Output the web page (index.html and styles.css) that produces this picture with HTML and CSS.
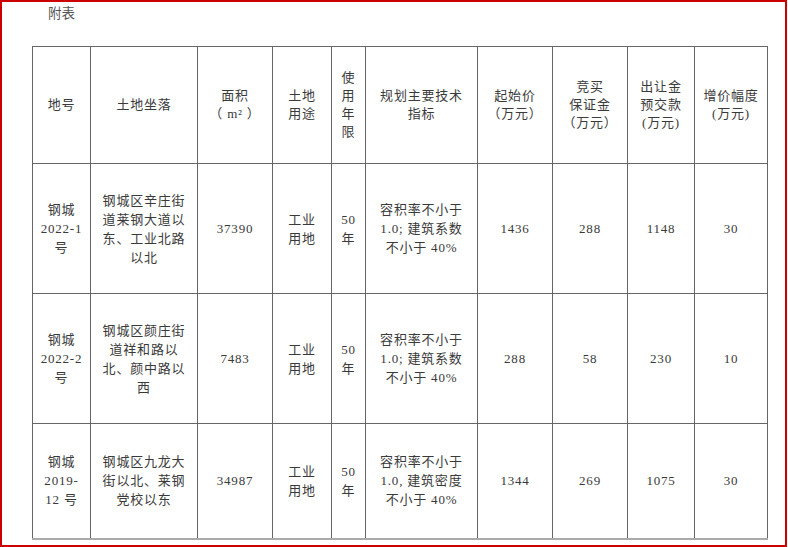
FILE: index.html
```html
<!DOCTYPE html>
<html lang="zh-CN">
<head>
<meta charset="utf-8">
<title>附表</title>
<link rel="stylesheet" href="styles.css">
</head>
<body>
<div class="frame">
  <div class="title">附表</div>
  <table class="land">
    <colgroup>
      <col class="c1"><col class="c2"><col class="c3"><col class="c4"><col class="c5">
      <col class="c6"><col class="c7"><col class="c8"><col class="c9"><col class="c10">
    </colgroup>
    <tr class="head">
      <td>地号</td>
      <td>土地坐落</td>
      <td>面积<br>（ m² ）</td>
      <td>土地<br>用途</td>
      <td>使<br>用<br>年<br>限</td>
      <td>规划主要技术<br>指标</td>
      <td>起始价<br>（万元）</td>
      <td>竞买<br>保证金<br>（万元）</td>
      <td>出让金<br>预交款<br>(万元)</td>
      <td>增价幅度<br>(万元)</td>
    </tr>
    <tr class="row">
      <td>钢城<br>2022-1<br>号</td>
      <td>钢城区辛庄街<br>道莱钢大道以<br>东、工业北路<br>以北</td>
      <td>37390</td>
      <td>工业<br>用地</td>
      <td>50<br>年</td>
      <td>容积率不小于<br>1.0; 建筑系数<br>不小于 40%</td>
      <td>1436</td>
      <td>288</td>
      <td>1148</td>
      <td>30</td>
    </tr>
    <tr class="row">
      <td>钢城<br>2022-2<br>号</td>
      <td>钢城区颜庄街<br>道祥和路以<br>北、颜中路以<br>西</td>
      <td>7483</td>
      <td>工业<br>用地</td>
      <td>50<br>年</td>
      <td>容积率不小于<br>1.0; 建筑系数<br>不小于 40%</td>
      <td>288</td>
      <td>58</td>
      <td>230</td>
      <td>10</td>
    </tr>
    <tr class="row last">
      <td>钢城<br>2019-<br>12 号</td>
      <td>钢城区九龙大<br>街以北、莱钢<br>党校以东</td>
      <td>34987</td>
      <td>工业<br>用地</td>
      <td>50<br>年</td>
      <td>容积率不小于<br>1.0, 建筑密度<br>不小于 40%</td>
      <td>1344</td>
      <td>269</td>
      <td>1075</td>
      <td>30</td>
    </tr>
  </table>
</div>
</body>
</html>
```
FILE: styles.css
```css
html, body {
  margin: 0;
  padding: 0;
  background: #fff;
}
.frame {
  box-sizing: border-box;
  width: 787px;
  height: 547px;
  border: 2px solid #cc0000;
  padding: 0 0 0 30px;
  font-family: "Liberation Serif", "Noto Sans CJK SC", serif;
  color: #3a3a3a;
}
.title {
  margin: 0 0 0 16px;
  height: 24px;
  line-height: 24px;
  font-size: 13.5px;
  color: #555;
}
.land {
  margin-top: 20px;
  border-collapse: collapse;
  table-layout: fixed;
  width: 736px;
  font-size: 13px;
  letter-spacing: 0.8px;
}
.c1 { width: 58px; }
.c2 { width: 107px; }
.c3 { width: 75px; }
.c4 { width: 59px; }
.c5 { width: 34px; }
.c6 { width: 112px; }
.c7 { width: 75px; }
.c8 { width: 75px; }
.c9 { width: 67px; }
.c10 { width: 73px; }
.land td {
  border: 1px solid #666;
  padding: 0 2px;
  text-align: center;
  vertical-align: middle;
  white-space: nowrap;
  overflow: hidden;
}
.head { height: 117px; }
.head td { line-height: 18px; }
.row { height: 130px; }
.row td { line-height: 19px; }
.row.last { height: 115px; }
.row.last td { border-bottom: 2px solid #aaa; }
```
